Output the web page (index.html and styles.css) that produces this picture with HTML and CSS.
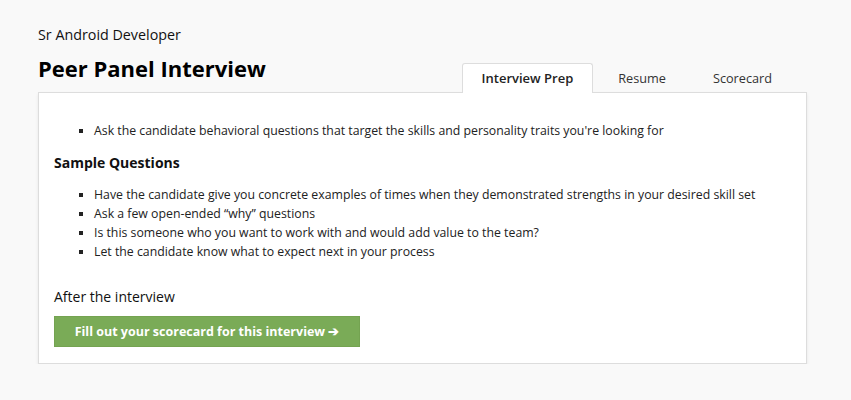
FILE: index.html
```html
<!DOCTYPE html>
<html>
<head>
<meta charset="utf-8">
<link rel="stylesheet" href="styles.css">
</head>
<body>
<div class="page">
  <div class="header">
    <div class="titles">
      <div class="subtitle">Sr Android Developer</div>
      <h1 class="title">Peer Panel Interview</h1>
    </div>
    <div class="tabs">
      <div class="tab active">Interview Prep</div>
      <div class="tab">Resume</div>
      <div class="tab">Scorecard</div>
    </div>
  </div>
  <div class="panel">
    <ul class="list first">
      <li>Ask the candidate behavioral questions that target the skills and personality traits you're looking for</li>
    </ul>
    <h2 class="section">Sample Questions</h2>
    <ul class="list">
      <li>Have the candidate give you concrete examples of times when they demonstrated strengths in your desired skill set</li>
      <li>Ask a few open-ended “why” questions</li>
      <li>Is this someone who you want to work with and would add value to the team?</li>
      <li>Let the candidate know what to expect next in your process</li>
    </ul>
    <div class="after">After the interview</div>
    <button class="cta">Fill out your scorecard for this interview ➔</button>
  </div>
</div>
</body>
</html>
```

FILE: styles.css
```css
html, body {
  margin: 0;
  padding: 0;
  background: #f9f9f9;
  font-family: "Open Sans", "Liberation Sans", sans-serif;
  color: #222;
}
.page {
  padding: 25px 44px 0 38px;
  width: 769px;
}
.header {
  display: flex;
  justify-content: space-between;
  align-items: flex-end;
}
.titles {
  padding-bottom: 9px;
}
.subtitle {
  font-size: 14.3px;
  line-height: 20px;
  color: #111;
}
.title {
  margin: 8px 0 0;
  font-size: 22px;
  line-height: 30px;
  font-weight: 700;
  color: #000;
}
.tabs {
  display: flex;
  gap: 3px;
  margin-right: 13px;
  margin-bottom: -1px;
  position: relative;
  z-index: 1;
}
.tab {
  height: 29px;
  line-height: 29px;
  padding: 0 21px;
  font-size: 12.7px;
  color: #333;
  border: 1px solid transparent;
  border-bottom: none;
  border-radius: 3px 3px 0 0;
}
.tab.active {
  background: #fff;
  border-color: #ddd;
  font-size: 13px;
  font-weight: 600;
  color: #222;
  padding: 0 19px;
}
.panel {
  background: #fff;
  border: 1px solid #ddd;
  box-shadow: 0 2px 3px rgba(0,0,0,0.08);
  padding: 16px 15px 16px;
}
.list {
  margin: 12px 0 0;
  padding-left: 40px;
  list-style: square;
  font-size: 12.3px;
  line-height: 19px;
  color: #222;
}
.list.first {
  margin-bottom: 13px;
}
.list li::marker {
  font-size: 11px;
}
.section {
  margin: 0;
  font-size: 14px;
  line-height: 20px;
  font-weight: 700;
  color: #111;
}
.after {
  margin-top: 26px;
  font-size: 14px;
  line-height: 20px;
  color: #111;
}
.cta {
  display: block;
  margin-top: 9px;
  width: 306px;
  height: 31px;
  background: #7aab57;
  border: 1px solid #74a351;
  color: #fff;
  font-family: "Open Sans", "Liberation Sans", sans-serif;
  font-size: 12.5px;
  font-weight: 700;
  padding: 0;
  cursor: pointer;
}
```
